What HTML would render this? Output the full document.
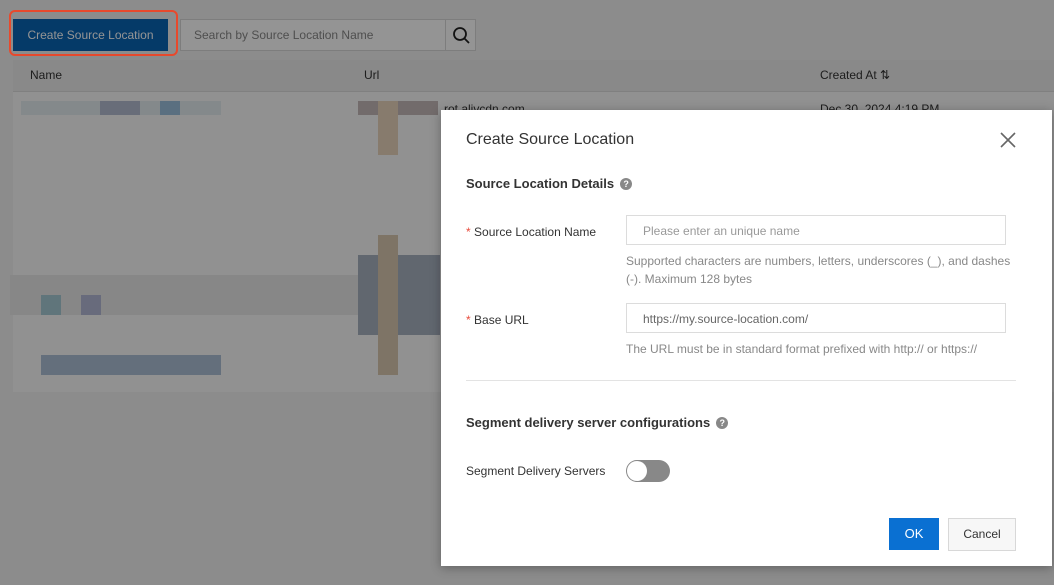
<!DOCTYPE html>
<html><head><style>
html,body{margin:0;width:1054px;height:585px}
body{background:#f2f2f2;font-family:"Liberation Sans",sans-serif;position:relative;overflow:hidden}
.a{position:absolute}
.ov{position:absolute;left:0;top:0;width:1054px;height:585px;background:rgba(0,0,0,0.42);z-index:5}
.m{position:absolute;z-index:10;left:441px;top:110px;width:611px;height:456px;background:#fff;box-shadow:0 2px 10px rgba(0,0,0,.3)}
.m .a{color:#333}
.inp{position:absolute;border:1px solid #dcdcdc;height:30px;box-sizing:border-box;font-size:12px;color:#999;padding:8px 16px}
.q{display:inline-block;width:12px;height:12px;border-radius:50%;background:#888;color:#fff;font-size:9px;text-align:center;line-height:12px;font-weight:bold;vertical-align:1px;margin-left:6px}
.r{color:#e84b3c}
</style></head><body>
<div class="a" style="left:13px;top:19px;width:155px;height:32px;background:#0a64b4;color:#fff;font-size:12px;line-height:32px;text-align:center">Create Source Location</div>
<div class="a" style="left:180px;top:19px;width:296px;height:32px;border:1px solid #d8d8d8;background:#fff;box-sizing:border-box;font-size:12px;color:#888;line-height:30px;padding-left:13px">Search by Source Location Name</div>
<div class="a" style="left:445px;top:19px;width:1px;height:32px;background:#d8d8d8"></div>
<svg class="a" style="left:452px;top:26px" width="18" height="18"><circle cx="8" cy="8" r="6" fill="none" stroke="#222" stroke-width="1.8"/><line x1="12.5" y1="12.5" x2="17" y2="17" stroke="#222" stroke-width="1.8"/></svg>
<div class="a" style="left:13px;top:60px;width:1041px;height:31px;background:#ececec;border-bottom:1px solid #ddd"></div>
<div class="a" style="left:13px;top:92px;width:1041px;height:300px;background:#fafafa"></div>
<div class="a" style="left:30px;top:68px;font-size:12px;color:#333">Name</div>
<div class="a" style="left:364px;top:68px;font-size:12px;color:#333">Url</div>
<div class="a" style="left:820px;top:68px;font-size:12px;color:#333">Created At ⇅</div>
<div class="a" style="left:444px;top:102px;font-size:12px;color:#333">rot.alivcdn.com</div>
<div class="a" style="left:820px;top:102px;font-size:12px;color:#333">Dec 30, 2024 4:19 PM</div>
<div class="a" style="left:21px;top:101px;width:200px;height:14px;background:#e4ecf0"></div>
<div class="a" style="left:160px;top:101px;width:20px;height:14px;background:#9cc0dc"></div>
<div class="a" style="left:100px;top:101px;width:40px;height:14px;background:#b4bcd0"></div>
<div class="a" style="left:358px;top:101px;width:80px;height:14px;background:#c4b8b8"></div>
<div class="a" style="left:378px;top:101px;width:20px;height:54px;background:#e8d4bc"></div>
<div class="a" style="left:358px;top:255px;width:82px;height:80px;background:#a8b2c0"></div>
<div class="a" style="left:378px;top:235px;width:20px;height:140px;background:#dac8b0"></div>
<div class="a" style="left:10px;top:275px;width:348px;height:40px;background:#e8e8e8"></div>
<div class="a" style="left:41px;top:295px;width:20px;height:20px;background:#a6cad4"></div>
<div class="a" style="left:81px;top:295px;width:20px;height:20px;background:#b4b8d6"></div>
<div class="a" style="left:41px;top:355px;width:180px;height:20px;background:#acc0d6"></div>
<div class="ov"></div>
<div class="a" style="z-index:6;left:9px;top:10px;width:169px;height:46px;border:2px solid #e8492c;border-radius:6px;box-sizing:border-box"></div>
<div class="m">
<div class="a" style="left:25px;top:21px;font-size:16px">Create Source Location</div>
<svg class="a" style="left:559px;top:22px" width="16" height="16"><path d="M1 1L15 15M15 1L1 15" stroke="#666" stroke-width="1.6"/></svg>
<div class="a" style="left:25px;top:66px;font-size:13px;font-weight:bold;color:#333">Source Location Details<span class="q">?</span></div>
<div class="a" style="left:25px;top:115px;font-size:12px"><span class="r">* </span>Source Location Name</div>
<div class="inp" style="left:185px;top:105px;width:380px">Please enter an unique name</div>
<div class="a" style="left:185px;top:142px;font-size:12px;color:#888!important;line-height:18px;width:390px">Supported characters are numbers, letters, underscores (_), and dashes (-). Maximum 128 bytes</div>
<div class="a" style="left:25px;top:203px;font-size:12px"><span class="r">* </span>Base URL</div>
<div class="inp" style="left:185px;top:193px;width:380px;color:#666">https://my.source-location.com/</div>
<div class="a" style="left:185px;top:232px;font-size:12px;color:#888!important">The URL must be in standard format prefixed with http:// or https://</div>
<div class="a" style="left:25px;top:270px;width:550px;height:1px;background:#e3e3e3"></div>
<div class="a" style="left:25px;top:305px;font-size:13px;font-weight:bold">Segment delivery server configurations<span class="q">?</span></div>
<div class="a" style="left:25px;top:354px;font-size:12px">Segment Delivery Servers</div>
<div class="a" style="left:185px;top:350px;width:44px;height:22px;border-radius:11px;background:#888"></div>
<div class="a" style="left:186px;top:351px;width:20px;height:20px;border-radius:50%;background:#fff"></div>
<div class="a" style="left:448px;top:408px;width:50px;height:32px;background:#0a70d2;color:#fff!important;font-size:13px;text-align:center;line-height:32px">OK</div>
<div class="a" style="left:507px;top:408px;width:66px;height:31px;border:1px solid #d8d8d8;background:#f7f7f7;font-size:12px;text-align:center;line-height:31px">Cancel</div>
</div>
</body></html>
